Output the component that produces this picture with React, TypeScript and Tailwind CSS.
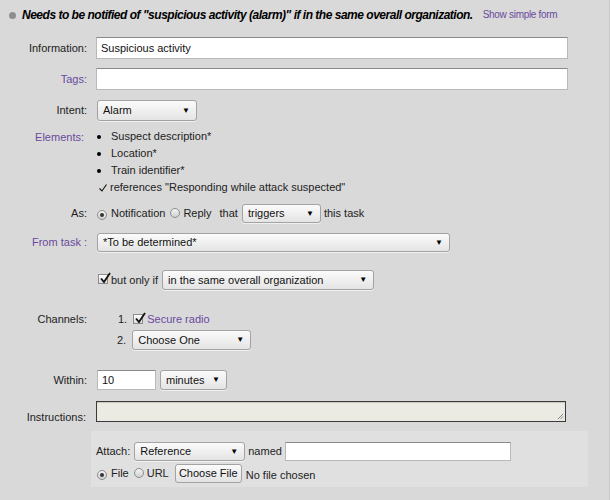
import { ReactNode } from "react"

function Arrow() {
  return <span className="text-[8px] leading-none text-black">▼</span>
}

function Select({
  value,
  className,
}: {
  value: string
  className: string
}) {
  return (
    <div
      className={`flex items-center justify-between rounded-[3px] border border-[#a3a3a3] bg-gradient-to-b from-[#fbfbfb] to-[#e4e4e4] pl-[5px] pr-[6px] text-[11px] text-[#111] shadow-[0_1px_0_rgba(255,255,255,0.6)] ${className}`}
    >
      <span>{value}</span>
      <Arrow />
    </div>
  )
}

function TextBox({ value, className }: { value?: string; className: string }) {
  return (
    <div
      className={`flex items-center border border-[#b9b9b9] border-t-[#8a8a8a] bg-white px-[4px] text-[11px] text-[#111] ${className}`}
    >
      {value}
    </div>
  )
}

function Radio({ checked }: { checked?: boolean }) {
  return (
    <span className="inline-flex h-[10px] w-[10px] items-center justify-center rounded-full border border-[#8c8c8c] bg-gradient-to-b from-[#f4f4f4] to-[#d0d0d0]">
      {checked && <span className="h-[4px] w-[4px] rounded-full bg-[#333]" />}
    </span>
  )
}

function Check() {
  return (
    <span className="relative inline-block h-[10px] w-[10px] border border-[#8c8c8c] bg-gradient-to-b from-white to-[#dcdcdc]">
      <svg
        viewBox="0 0 12 12"
        className="absolute -top-[3px] left-[0px] h-[12px] w-[12px]"
      >
        <path d="M2 6.5 L5 10 L11 1" fill="none" stroke="#111" strokeWidth="1.8" />
      </svg>
    </span>
  )
}

function Row({
  label,
  purple,
  children,
  className = "",
}: {
  label: string
  purple?: boolean
  children: ReactNode
  className?: string
}) {
  return (
    <div className={`flex items-center ${className}`}>
      <div
        className={`w-[87px] shrink-0 text-right ${purple ? "text-[#6a4a9e]" : "text-[#222]"}`}
      >
        {label}
      </div>
      <div className="ml-[9px] flex items-center">{children}</div>
    </div>
  )
}

export default function App() {
  return (
    <div className="h-[500px] w-[610px] overflow-hidden border-r border-[#c9c9c9] bg-[#d9d9d9] font-['Liberation_Sans',Arial,sans-serif] text-[11px] leading-none text-[#222]">
      <div className="flex h-[30px] items-center pl-[9px]">
        <span className="h-[7px] w-[7px] rounded-full bg-[#8e8e8e]" />
        <span className="ml-[6px] text-[12px] font-bold italic tracking-[-0.49px] text-black">
          Needs to be notified of "suspicious activity (alarm)" if in the same
          overall organization.
        </span>
        <span className="ml-[10px] text-[10px] tracking-[-0.3px] text-[#6a4a9e]">
          Show simple form
        </span>
      </div>

      <Row label="Information:" className="mt-[7px] h-[22px]">
        <TextBox value="Suspicious activity" className="h-[22px] w-[472px]" />
      </Row>
      <Row label="Tags:" purple className="mt-[9px] h-[22px]">
        <TextBox className="h-[22px] w-[472px]" />
      </Row>
      <Row label="Intent:" className="mt-[10px] h-[21px]">
        <Select value="Alarm" className="ml-[1px] h-[21px] w-[100px]" />
      </Row>

      <div className="mt-[7px] flex">
        <div className="w-[84px] shrink-0 pt-[4px] text-right text-[#6a4a9e]">
          Elements:
        </div>
        <div className="ml-[12px] flex flex-col">
          {["Suspect description*", "Location*", "Train identifier*"].map(t => (
            <div key={t} className="flex h-[17px] items-center">
              <span className="ml-[1px] h-[4px] w-[4px] rounded-full bg-black" />
              <span className="ml-[10px]">{t}</span>
            </div>
          ))}
          <div className="flex h-[17px] items-center">
            <svg viewBox="0 0 8 8" className="ml-[3px] h-[8px] w-[8px]">
              <path d="M0.5 4.5 L3 7 L7.5 0.5" fill="none" stroke="#111" strokeWidth="1.1" />
            </svg>
            <span className="ml-[3px]">references "Responding while attack suspected"</span>
          </div>
        </div>
      </div>

      <Row label="As:" className="mt-[8px] h-[19px]">
        <span className="ml-[1px]">
          <Radio checked />
        </span>
        <span className="ml-[4px]">Notification</span>
        <span className="ml-[5px]">
          <Radio />
        </span>
        <span className="ml-[3px]">Reply</span>
        <span className="ml-[8px]">that</span>
        <Select value="triggers" className="ml-[4px] h-[19px] w-[79px]" />
        <span className="ml-[3px]">this task</span>
      </Row>

      <Row label="From task :" purple className="mt-[10px] h-[19px]">
        <Select value="*To be determined*" className="ml-[1px] h-[19px] w-[353px]" />
      </Row>

      <Row label="" className="mt-[18px] h-[20px]">
        <span className="ml-[2px]">
          <Check />
        </span>
        <span className="ml-[3px]">but only if</span>
        <Select
          value="in the same overall organization"
          className="ml-[4px] h-[20px] w-[212px]"
        />
      </Row>

      <Row label="Channels:" className="mt-[21px] h-[17px]">
        <span className="ml-[22px]">1.</span>
        <span className="ml-[6px]">
          <Check />
        </span>
        <span className="ml-[4px] text-[#6a4a9e]">Secure radio</span>
      </Row>
      <div className="mt-[2px] flex h-[20px] items-center pl-[117px]">
        <span>2.</span>
        <Select value="Choose One" className="ml-[6px] h-[20px] w-[119px]" />
      </div>

      <Row label="Within:" className="mt-[20px] h-[20px]">
        <TextBox value="10" className="ml-[1px] h-[20px] w-[59px]" />
        <Select value="minutes" className="ml-[4px] h-[20px] w-[67px]" />
      </Row>

      <div className="mt-[11px] flex items-end">
        <div className="w-[86px] shrink-0 -mb-[1px] text-right">Instructions:</div>
        <div className="relative ml-[10px] h-[21px] w-[470px] border border-[#3a3a3a] bg-[#ebebe3] shadow-[inset_0_1px_1px_rgba(0,0,0,0.15)]">
          <svg viewBox="0 0 8 8" className="absolute bottom-[1px] right-[1px] h-[7px] w-[7px]">
            <path d="M1 7 L7 1 M4 7 L7 4" stroke="#777" strokeWidth="1" />
          </svg>
        </div>
      </div>

      <div className="ml-[91px] mt-[9px] h-[56px] w-[497px] bg-[#e0e0e0] pl-[5px] pt-[11px]">
        <div className="flex h-[19px] items-center">
          <span>Attach:</span>
          <Select value="Reference" className="ml-[4px] h-[19px] w-[111px]" />
          <span className="ml-[3px]">named</span>
          <TextBox className="ml-[3px] h-[19px] w-[226px]" />
        </div>
        <div className="mt-[3px] flex h-[19px] items-center">
          <span className="ml-[1px]">
            <Radio checked />
          </span>
          <span className="ml-[4px]">File</span>
          <span className="ml-[5px]">
            <Radio />
          </span>
          <span className="ml-[3px]">URL</span>
          <div className="ml-[6px] flex h-[19px] w-[67px] items-center justify-center rounded-[3px] border border-[#a3a3a3] bg-gradient-to-b from-[#fbfbfb] to-[#e2e2e2] text-[11px] text-[#111]">
            Choose File
          </div>
          <span className="ml-[4px] mt-[4px]">No file chosen</span>
        </div>
      </div>
    </div>
  )
}
